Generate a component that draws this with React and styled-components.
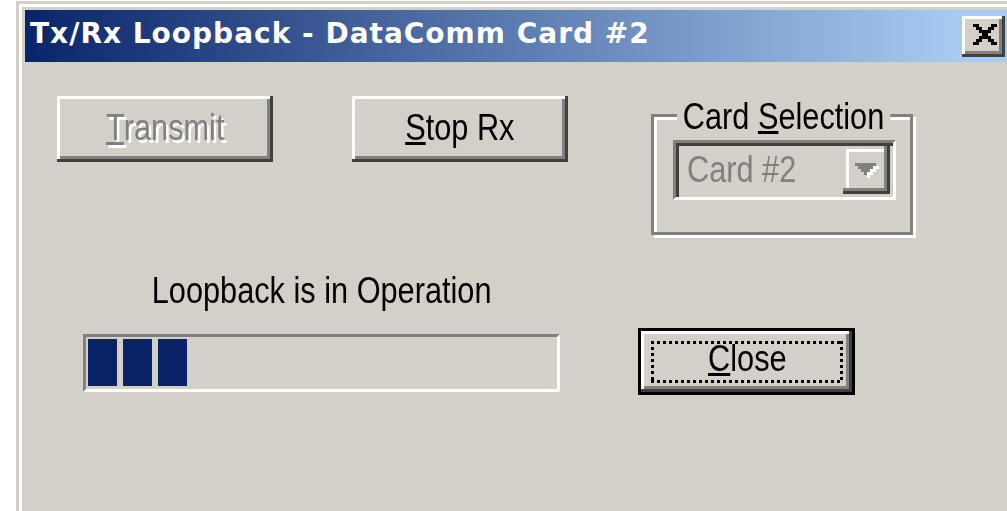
import React from 'react';
import styled, { createGlobalStyle } from 'styled-components';

const FACE = '#d4d0c8';
const SHADOW = '#808080';
const DARK = '#404040';
const HILITE = '#ffffff';
const UI_FONT = `"Liberation Sans", Arial, sans-serif`;
const NARROW = 0.83;

const GlobalStyle = createGlobalStyle`
  html, body {
    margin: 0;
    padding: 0;
    background: #fff;
    overflow: hidden;
  }
  #root {
    width: 1007px;
    height: 511px;
    overflow: hidden;
  }
`;

const Window = styled.div`
  margin: 1px 0 0 16px;
  width: 1001px;
  height: 560px;
  box-sizing: border-box;
  padding: 9px 9px 0 9px;
  background: ${FACE};
  box-shadow: inset 3px 3px 0 ${FACE}, inset 6px 6px 0 ${HILITE};
  font-family: ${UI_FONT};
  font-size: 37px;
  line-height: 44px;
  color: #000;
`;

const TitleBar = styled.div`
  height: 52px;
  display: flex;
  align-items: center;
  padding: 0 3px 0 5px;
  background: linear-gradient(90deg, #0a246a 0, #a6caf0 930px);
`;

const Title = styled.div`
  flex: 1;
  padding-bottom: 5px;
  font-family: "DejaVu Sans", Tahoma, sans-serif;
  font-weight: bold;
  font-size: 28px;
  line-height: 34px;
  letter-spacing: 1px;
  color: #fff;
  white-space: nowrap;
`;

/* condensed system face: the dialog font is much narrower than Arial */
const Face = styled.span`
  display: inline-block;
  white-space: nowrap;
  transform: scaleX(${NARROW});
  transform-origin: ${p => p.$origin || 'center'};
`;

const bevel = `
  box-shadow:
    inset -3px -3px 0 ${DARK},
    inset 3px 3px 0 ${HILITE},
    inset -6px -6px 0 ${SHADOW};
`;

const CaptionButton = styled.div`
  width: 43px;
  height: 41px;
  box-sizing: border-box;
  padding: 0 0 3px 2px;
  display: flex;
  align-items: center;
  justify-content: center;
  background: ${FACE};
  ${bevel}
`;

const Body = styled.div`
  padding: 34px 0 0 32px;
`;

const TopRow = styled.div`
  display: flex;
  align-items: flex-start;
`;

const PushButton = styled.div`
  width: ${p => p.$w || 216}px;
  height: ${p => p.$h || 66}px;
  margin-left: ${p => p.$ml || 0}px;
  box-sizing: border-box;
  display: flex;
  align-items: center;
  justify-content: center;
  padding-bottom: 2px;
  background: ${FACE};
  color: ${p => (p.$disabled ? SHADOW : '#000')};
  text-shadow: ${p => (p.$disabled ? `3px 3px 0 ${HILITE}` : 'none')};
  ${bevel}
  white-space: nowrap;
`;

const DefaultButton = styled(PushButton)`
  border: 3px solid #000;
  padding: 10px 9px 9px 10px;
  align-items: stretch;
  justify-content: stretch;
`;

const FocusRing = styled.div`
  flex: 1;
  display: flex;
  align-items: center;
  justify-content: center;
  padding-bottom: 6px;
  background:
    repeating-linear-gradient(90deg, #000 0 3px, transparent 3px 6px) left top / 100% 3px no-repeat,
    repeating-linear-gradient(90deg, #000 0 3px, transparent 3px 6px) left bottom / 100% 3px no-repeat,
    repeating-linear-gradient(180deg, #000 0 3px, transparent 3px 6px) left top / 3px 100% no-repeat,
    repeating-linear-gradient(180deg, #000 0 3px, transparent 3px 6px) right top / 3px 100% no-repeat;
`;

const Mnemonic = styled.span`
  text-decoration: underline;
  text-decoration-thickness: 3px;
  text-underline-offset: 2px;
`;

const GroupBox = styled.div`
  position: relative;
  margin: 18px 0 0 83px;
  width: 262px;
  height: 121px;
  box-sizing: border-box;
  border: 3px solid ${SHADOW};
  box-shadow: inset 3px 3px 0 ${HILITE}, 3px 3px 0 ${HILITE};
  padding: 23px 0 0 19px;
`;

const Legend = styled.span`
  position: absolute;
  top: -22px;
  left: 23px;
  padding: 0 7px;
  background: ${FACE};
  white-space: nowrap;
  transform: scaleX(${NARROW});
  transform-origin: left;
`;

const Combo = styled.div`
  width: 223px;
  height: 60px;
  box-sizing: border-box;
  display: flex;
  border: 3px solid;
  border-color: ${SHADOW} ${HILITE} ${HILITE} ${SHADOW};
  padding: 3px;
  box-shadow: inset 3px 3px 0 ${DARK};
  background: ${FACE};
`;

const ComboText = styled.div`
  flex: 1;
  display: flex;
  align-items: center;
  padding-left: 8px;
  color: ${SHADOW};
`;

const DropButton = styled.div`
  width: 47px;
  height: 48px;
  display: flex;
  align-items: center;
  justify-content: center;
  box-shadow:
    inset -3px -3px 0 ${DARK},
    inset -6px -6px 0 ${SHADOW},
    inset 3px 3px 0 ${FACE},
    inset 6px 6px 0 ${HILITE};
`;

const BottomRow = styled.div`
  display: flex;
  align-items: flex-start;
  margin-top: 34px;
  padding-left: 26px;
`;

const StatusColumn = styled.div`
  width: 477px;
  display: flex;
  flex-direction: column;
`;

const StatusLabel = styled.div`
  text-align: center;
  white-space: nowrap;
`;

const Progress = styled.div`
  margin-top: 21px;
  height: 58px;
  box-sizing: border-box;
  border: 3px solid;
  border-color: ${SHADOW} ${HILITE} ${HILITE} ${SHADOW};
  padding: 2px 2px 3px 2px;
  display: flex;
  gap: 6px;
`;

const Chunk = styled.div`
  width: 29px;
  background: #0a2266;
`;

const CloseGlyph = () => (
  <svg width="24" height="21" viewBox="0 0 8 7" shapeRendering="crispEdges">
    <path
      fill="#000"
      d="M0 0h2v1H0zM6 0h2v1H6zM1 1h2v1H1zM5 1h2v1H5zM2 2h4v1H2zM3 3h2v1H3zM2 4h4v1H2zM1 5h2v1H1zM5 5h2v1H5zM0 6h2v1H0zM6 6h2v1H6z"
    />
  </svg>
);

const DownArrow = () => (
  <svg width="24" height="15" viewBox="0 0 8 5" shapeRendering="crispEdges">
    <path fill="#fff" d="M1 1h7v1H1zM2 2h5v1H2zM3 3h3v1H3zM4 4h1v1H4z" />
    <path fill={SHADOW} d="M0 0h7v1H0zM1 1h5v1H1zM2 2h3v1H2zM3 3h1v1H3z" />
  </svg>
);

export default function App() {
  const chunks = 3;
  return (
    <>
      <GlobalStyle />
      <Window>
        <TitleBar>
          <Title>Tx/Rx Loopback - DataComm Card #2</Title>
          <CaptionButton>
            <CloseGlyph />
          </CaptionButton>
        </TitleBar>
        <Body>
          <TopRow>
            <PushButton $disabled>
              <Face>
                <Mnemonic>T</Mnemonic>ransmit
              </Face>
            </PushButton>
            <PushButton $ml={79}>
              <Face>
                <Mnemonic>S</Mnemonic>top Rx
              </Face>
            </PushButton>
            <GroupBox>
              <Legend>
                Card <Mnemonic>S</Mnemonic>election
              </Legend>
              <Combo>
                <ComboText>
                  <Face $origin="left">Card #2</Face>
                </ComboText>
                <DropButton>
                  <DownArrow />
                </DropButton>
              </Combo>
            </GroupBox>
          </TopRow>
          <BottomRow>
            <StatusColumn>
              <StatusLabel>
                <Face>Loopback is in Operation</Face>
              </StatusLabel>
              <Progress>
                {Array.from({ length: chunks }, (_, i) => (
                  <Chunk key={i} />
                ))}
              </Progress>
            </StatusColumn>
            <DefaultButton $w={217} $h={67} $ml={78} style={{ marginTop: 59 }}>
              <FocusRing>
                <Face>
                  <Mnemonic>C</Mnemonic>lose
                </Face>
              </FocusRing>
            </DefaultButton>
          </BottomRow>
        </Body>
      </Window>
    </>
  );
}
